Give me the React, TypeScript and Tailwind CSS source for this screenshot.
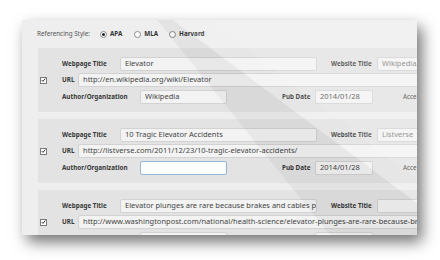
import type { ReactNode } from 'react'

const font = { fontFamily: '"Noto Sans", "Liberation Sans", sans-serif' }

function Label({ children, className = '' }: { children: ReactNode; className?: string }) {
  return <span className={`shrink-0 text-[6.3px] font-bold text-[#383838] ${className}`}>{children}</span>
}

function Field({ value = '', className = '', focus = false, muted = false }: { value?: string; className?: string; focus?: boolean; muted?: boolean }) {
  return (
    <div
      className={`flex h-[14px] shrink-0 items-center overflow-hidden whitespace-nowrap rounded-[2px] border px-[4px] text-[7.5px] ${
        focus ? 'border-[#8fb8d8] bg-white' : 'border-[#d2d2d2] bg-[#f3f3f3]'
      } ${muted ? 'text-[#7a7a7a]' : 'text-[#444]'} ${className}`}
    >
      {value}
    </div>
  )
}

function Radio({ checked, label, className = '' }: { checked?: boolean; label: string; className?: string }) {
  return (
    <div className={`flex items-center ${className}`}>
      <span className="flex h-[7px] w-[7px] items-center justify-center rounded-full border border-[#8a8a8a] bg-white">
        {checked && <span className="h-[3px] w-[3px] rounded-full bg-[#222]" />}
      </span>
      <span className="ml-[3px] text-[6.3px] font-bold text-[#333]">{label}</span>
    </div>
  )
}

function Check() {
  return (
    <span className="flex h-[7px] w-[7px] items-center justify-center border border-[#7a7a7a] bg-white">
      <svg viewBox="0 0 8 8" className="h-[6px] w-[6px]">
        <path d="M1.2 4.2 L3.2 6.2 L6.8 1.6" fill="none" stroke="#222" strokeWidth="1.5" />
      </svg>
    </span>
  )
}

type Ref = {
  title: string
  site: string
  url: string
  author: string
  date: string
  focus?: boolean
}

const refs: Ref[] = [
  { title: 'Elevator', site: 'Wikipedia,', url: 'http://en.wikipedia.org/wiki/Elevator', author: 'Wikipedia', date: '2014/01/28' },
  { title: '10 Tragic Elevator Accidents', site: 'Listverse', url: 'http://listverse.com/2011/12/23/10-tragic-elevator-accidents/', author: '', date: '2014/01/28', focus: true },
  { title: 'Elevator plunges are rare because brakes and cables pr', site: '', url: 'http://www.washingtonpost.com/national/health-science/elevator-plunges-are-rare-because-brakes-and-cables', author: '', date: '' },
]

function Card({ r }: { r: Ref }) {
  return (
    <div className="flex h-[64px] w-[420px] shrink-0 items-center bg-[#e3e3e3]">
      <div className="ml-[2px] w-[22px]">
        <Check />
      </div>
      <div className="flex flex-col gap-[2.5px]">
        <div className="flex items-center">
          <Label className="w-[58px]">Webpage Title</Label>
          <Field value={r.title} className="w-[197px]" />
          <Label className="ml-[14px] w-[46px]">Website Title</Label>
          <Field value={r.site} muted className="w-[60px]" />
        </div>
        <div className="flex items-center">
          <Label className="w-[16px]">URL</Label>
          <Field value={r.url} className="w-[360px]" />
        </div>
        <div className="flex items-center">
          <Label className="w-[78px]">Author/Organization</Label>
          <Field value={r.author} focus={r.focus} className="w-[87px]" />
          <Label className="ml-[55px] w-[33px]">Pub Date</Label>
          <Field value={r.date} className="w-[58px]" />
          <Label className="ml-[30px] font-normal text-[#555]">Acce</Label>
        </div>
      </div>
    </div>
  )
}

export default function App() {
  return (
    <div className="h-[260px] w-[440px] overflow-hidden bg-white pl-[22px] pt-[20px]" style={font}>
      <div className="relative h-[215px] w-[395px] overflow-hidden bg-[#eeeeee] shadow-[5px_7px_14px_rgba(0,0,0,0.55)]">
        <div className="flex h-[28px] items-center pl-[15px]">
          <span className="text-[6.3px] text-[#555]">Referencing Style:</span>
          <Radio checked label="APA" className="ml-[10px]" />
          <Radio label="MLA" className="ml-[12px]" />
          <Radio label="Harvard" className="ml-[11px]" />
        </div>
        <div className="flex flex-col gap-[7px] pl-[16px]">
          {refs.map((r, i) => (
            <Card key={i} r={r} />
          ))}
        </div>
        {/* glare over the screenshot */}
        <svg className="pointer-events-none absolute inset-0" width="395" height="215" viewBox="0 0 395 215">
          <polygon points="135,0 151,0 395,183 395,215 308,215" fill="#000" fillOpacity="0.045" />
          <polygon points="151,0 395,0 395,183" fill="#fff" fillOpacity="0.13" />
          <polygon points="188,0 395,0 395,160" fill="#fff" fillOpacity="0.1" />
        </svg>
      </div>
    </div>
  )
}
